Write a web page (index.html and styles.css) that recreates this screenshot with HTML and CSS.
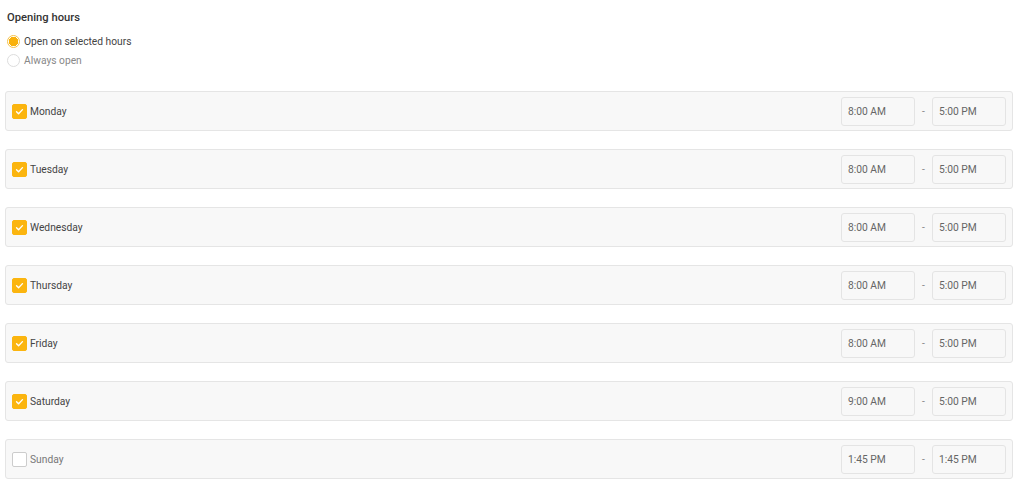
FILE: index.html
```html
<!DOCTYPE html>
<html lang="en">
<head>
    <meta charset="UTF-8">
    <title>Opening hours</title>
    <link rel="stylesheet" href="styles.css">
</head>
<body>
    <div class="hours">
        <h3>Opening hours</h3>

        <div class="mode">
            <label class="radio"><span class="dot checked"></span>Open on selected hours</label>
            <label class="radio muted"><span class="dot"></span>Always open</label>
        </div>

        <div class="days">
            <div class="day">
                <label class="check"><span class="box on"><svg viewBox="0 0 14 14"><path d="M3.8 7.2l2.2 2.2 4.2-4.4"/></svg></span>Monday</label>
                <div class="range"><div class="time">8:00 AM</div><span class="dash">-</span><div class="time">5:00 PM</div></div>
            </div>
            <div class="day">
                <label class="check"><span class="box on"><svg viewBox="0 0 14 14"><path d="M3.8 7.2l2.2 2.2 4.2-4.4"/></svg></span>Tuesday</label>
                <div class="range"><div class="time">8:00 AM</div><span class="dash">-</span><div class="time">5:00 PM</div></div>
            </div>
            <div class="day">
                <label class="check"><span class="box on"><svg viewBox="0 0 14 14"><path d="M3.8 7.2l2.2 2.2 4.2-4.4"/></svg></span>Wednesday</label>
                <div class="range"><div class="time">8:00 AM</div><span class="dash">-</span><div class="time">5:00 PM</div></div>
            </div>
            <div class="day">
                <label class="check"><span class="box on"><svg viewBox="0 0 14 14"><path d="M3.8 7.2l2.2 2.2 4.2-4.4"/></svg></span>Thursday</label>
                <div class="range"><div class="time">8:00 AM</div><span class="dash">-</span><div class="time">5:00 PM</div></div>
            </div>
            <div class="day">
                <label class="check"><span class="box on"><svg viewBox="0 0 14 14"><path d="M3.8 7.2l2.2 2.2 4.2-4.4"/></svg></span>Friday</label>
                <div class="range"><div class="time">8:00 AM</div><span class="dash">-</span><div class="time">5:00 PM</div></div>
            </div>
            <div class="day">
                <label class="check"><span class="box on"><svg viewBox="0 0 14 14"><path d="M3.8 7.2l2.2 2.2 4.2-4.4"/></svg></span>Saturday</label>
                <div class="range"><div class="time">9:00 AM</div><span class="dash">-</span><div class="time">5:00 PM</div></div>
            </div>
            <div class="day">
                <label class="check off"><span class="box"></span>Sunday</label>
                <div class="range"><div class="time">1:45 PM</div><span class="dash">-</span><div class="time">1:45 PM</div></div>
            </div>
        </div>
    </div>
</body>
</html>
```

FILE: styles.css
```css
body {
    margin: 0;
    font-family: Roboto, "Liberation Sans", sans-serif;
    font-size: 10.25px;
    color: #444;
    background: #fff;
}
.hours {
    padding: 10px 11px 10px 5px;
}
h3 {
    margin: 0 0 7px 2px;
    font-size: 11.2px;
    font-weight: 500;
    color: #333;
    line-height: 16px;
}
.mode {
    display: flex;
    flex-direction: column;
    gap: 2px;
    margin-left: 2px;
}
.radio {
    display: flex;
    align-items: center;
    gap: 4px;
    height: 17px;
    color: #444;
}
.radio.muted {
    color: #888;
}
.dot {
    width: 11px;
    height: 11px;
    border: 1px solid #ddd;
    border-radius: 50%;
    background: #fff;
}
.dot.checked {
    border-color: #f5c24a;
    background: radial-gradient(circle, #f9b10b 0 4.5px, #fff 5px);
}
.days {
    margin-top: 22px;
    display: flex;
    flex-direction: column;
    gap: 18px;
}
.day {
    display: flex;
    align-items: center;
    justify-content: space-between;
    height: 38px;
    padding: 0 6px;
    background: #f8f8f8;
    border: 1px solid #e5e5e5;
    border-radius: 3px;
}
.check {
    display: flex;
    align-items: center;
    gap: 3px;
    color: #444;
}
.check.off {
    color: #777;
}
.box {
    width: 13px;
    height: 13px;
    border: 1px solid #ccc;
    border-radius: 2px;
    background: #fff;
    display: flex;
}
.box.on {
    background: #fbb50f;
    border-color: #fbb50f;
}
.box svg {
    width: 13px;
    height: 13px;
}
.box path {
    fill: none;
    stroke: #fff;
    stroke-width: 1.5;
    stroke-linecap: round;
    stroke-linejoin: round;
}
.range {
    display: flex;
    align-items: center;
}
.time {
    width: 60px;
    height: 27px;
    line-height: 27px;
    padding: 0 6px;
    border: 1px solid #e4e4e4;
    border-radius: 3px;
    background: #f8f8f8;
    color: #666;
}
.dash {
    width: 17px;
    text-align: center;
    color: #888;
}
```
